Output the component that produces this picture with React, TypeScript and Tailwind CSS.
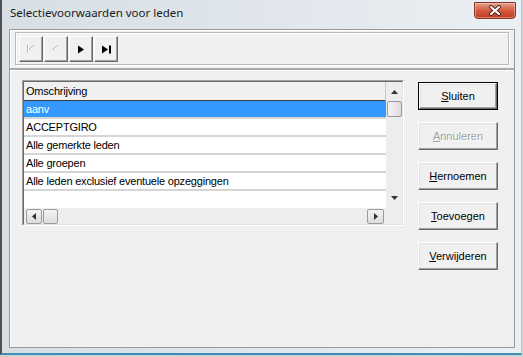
import React from "react";

const rows = [
  "aanv",
  "ACCEPTGIRO",
  "Alle gemerkte leden",
  "Alle groepen",
  "Alle leden exclusief eventuele opzeggingen",
];

function TbButton({ children }: { children: React.ReactNode }) {
  return (
    <div className="w-[24px] h-[26px] flex items-center justify-center bg-[#f0f0f0] border border-t-white border-l-white border-r-[#696969] border-b-[#696969] shadow-[inset_-1px_-1px_0_#a0a0a0]">
      {children}
    </div>
  );
}

function Btn({
  u,
  post,
  def,
  disabled,
}: {
  u: string;
  post: string;
  def?: boolean;
  disabled?: boolean;
}) {
  const inner = (
    <div
      className={
        "w-full h-full flex items-center justify-center bg-[#f0f0f0] border border-t-white border-l-white border-r-[#696969] border-b-[#696969] shadow-[inset_-1px_-1px_0_#a0a0a0,inset_1px_1px_0_#e3e3e3] " +
        (disabled ? "text-[#a0a0a0] [text-shadow:1px_1px_0_#fff]" : "text-black")
      }
    >
      <span>
        <u className="underline-offset-[1px]">{u}</u>
        {post}
      </span>
    </div>
  );
  return (
    <div className={"w-[80px] h-[28px] " + (def ? "border border-black" : "")}>
      {inner}
    </div>
  );
}

export default function App() {
  return (
    <div className="w-[523px] h-[357px] bg-[#cfd3d6] overflow-hidden font-['Liberation_Sans',Arial,sans-serif] text-[11px]">
      <div className="w-[522px] h-[355px] flex flex-col border-l-2 border-l-[#505050] border-r border-r-[#9fd4ea] border-b-2 border-b-[#3f8db4] bg-gradient-to-r from-[#d7dfe5] via-[#e0e6eb] to-[#eaf0f3]">
        {/* title bar */}
        <div className="h-[29px] flex justify-between items-start">
          <div className="pl-[8px] pt-[5px] text-[11.5px] leading-[16px] text-[#1b1b1b] font-['Noto_Sans',sans-serif]">
            Selectievoorwaarden voor leden
          </div>
          <div className="mt-[2px] mr-[5px] w-[42px] h-[17px] rounded-b-[4px] border border-[#8a3322] bg-gradient-to-b from-[#e6a08c] via-[#d25a3e] to-[#c23a22] flex items-center justify-center shadow-[inset_0_0_0_1px_rgba(255,255,255,0.35)]">
            <svg width="14" height="11" viewBox="0 0 14 11">
              <path d="M3 2 L11 9 M11 2 L3 9" stroke="#5a2a22" strokeWidth="4" strokeLinecap="round" />
              <path d="M3 2 L11 9 M11 2 L3 9" stroke="#ffffff" strokeWidth="2" strokeLinecap="round" />
            </svg>
          </div>
        </div>
        {/* client area */}
        <div className="ml-[7px] w-[506px] h-[319px] border border-[#9a9a9a] bg-[#f0f0f0] shadow-[inset_1px_1px_0_#ffffff] flex flex-col">
          {/* toolbar */}
          <div className="ml-[5px] mt-[2px] w-[494px] h-[33px] border border-[#b9b9b9] shadow-[inset_1px_1px_0_#fff,1px_1px_0_#fff] flex gap-[1px] pl-[3px] pt-[3px]">
            <TbButton>
              <svg width="10" height="10" viewBox="0 0 10 10">
                <path d="M1.5 1 V9" stroke="#b8b8b8" />
                <path d="M8.5 1 L3 5 L8.5 9" stroke="#b8b8b8" fill="none" />
                <path d="M2.5 2 V10 M9.5 2 L4 6 L9.5 10" stroke="#ffffff" strokeOpacity="0.9" fill="none" />
              </svg>
            </TbButton>
            <TbButton>
              <svg width="10" height="10" viewBox="0 0 10 10">
                <path d="M7.5 1 L2 5 L7.5 9" stroke="#b8b8b8" fill="none" />
                <path d="M8.5 2 L3 6 L8.5 10" stroke="#ffffff" strokeOpacity="0.9" fill="none" />
              </svg>
            </TbButton>
            <TbButton>
              <svg width="8" height="9" viewBox="0 0 8 9">
                <path d="M1 0.5 L7 4.5 L1 8.5 Z" fill="#000" />
              </svg>
            </TbButton>
            <TbButton>
              <svg width="11" height="9" viewBox="0 0 11 9">
                <path d="M1 0.5 L7 4.5 L1 8.5 Z" fill="#000" />
                <rect x="8" y="0.5" width="2" height="8" fill="#000" />
              </svg>
            </TbButton>
          </div>
          <div className="mt-[3px] h-[3px] border-t-2 border-[#a9a9a9] border-b border-b-white" />
          {/* main */}
          <div className="flex mt-[9px] ml-[12px]">
            {/* list frame */}
            <div className="w-[382px] h-[146px] border border-t-[#a0a0a0] border-l-[#a0a0a0] border-b-white border-r-white">
              <div className="w-full h-full border border-t-[#696969] border-l-[#696969] border-b-[#e3e3e3] border-r-[#e3e3e3] flex flex-col tracking-[-0.2px]">
                <div className="flex h-[126px]">
                  <div className="w-[362px] flex flex-col bg-white">
                    <div className="h-[19px] bg-[#f0f0f0] border-b border-[#404040] border-r border-r-[#c8c8c8] pl-[2px] flex items-center text-black">
                      Omschrijving
                    </div>
                    {rows.map((r, i) => (
                      <div
                        key={r}
                        className={
                          "h-[18px] border-b-2 border-[#d6d6d6] pl-[2px] flex items-center whitespace-nowrap " +
                          (i === 0 ? "bg-[#3399ff] text-white" : "bg-white text-black")
                        }
                      >
                        {r}
                      </div>
                    ))}
                    <div className="h-[17px] bg-white" />
                  </div>
                  {/* vertical scrollbar */}
                  <div className="w-[16px] bg-[#ededed] flex flex-col items-center">
                    <div className="h-[19px] flex items-center justify-center">
                      <svg width="7" height="4" viewBox="0 0 7 4">
                        <path d="M0 4 L3.5 0 L7 4 Z" fill="#333" />
                      </svg>
                    </div>
                    <div className="w-[15px] h-[16px] border border-[#9a9a9a] bg-gradient-to-r from-[#f4f4f4] to-[#dcdcdc] rounded-[2px]" />
                    <div className="flex-1" />
                    <div className="h-[20px] flex items-center justify-center">
                      <svg width="7" height="4" viewBox="0 0 7 4">
                        <path d="M0 0 L3.5 4 L7 0 Z" fill="#333" />
                      </svg>
                    </div>
                  </div>
                </div>
                {/* horizontal scrollbar */}
                <div className="flex h-[16px] bg-[#ededed]">
                  <div className="w-[362px] flex items-center pl-[2px] pr-[2px]">
                    <div className="w-[16px] h-[15px] border border-[#9a9a9a] rounded-[2px] bg-gradient-to-b from-[#f4f4f4] to-[#dcdcdc] flex items-center justify-center">
                      <svg width="4" height="7" viewBox="0 0 4 7">
                        <path d="M4 0 L0 3.5 L4 7 Z" fill="#333" />
                      </svg>
                    </div>
                    <div className="ml-[1px] w-[15px] h-[15px] border border-[#9a9a9a] rounded-[2px] bg-gradient-to-b from-[#f4f4f4] to-[#dcdcdc]" />
                    <div className="flex-1" />
                    <div className="w-[17px] h-[15px] border border-[#9a9a9a] rounded-[2px] bg-gradient-to-b from-[#f4f4f4] to-[#dcdcdc] flex items-center justify-center">
                      <svg width="4" height="7" viewBox="0 0 4 7">
                        <path d="M0 0 L4 3.5 L0 7 Z" fill="#333" />
                      </svg>
                    </div>
                  </div>
                  <div className="w-[16px]" />
                </div>
              </div>
            </div>
            {/* buttons */}
            <div className="ml-[14px] mt-[2px] flex flex-col gap-[12px]">
              <Btn u="S" post="luiten" def />
              <Btn u="A" post="nnuleren" disabled />
              <Btn u="H" post="ernoemen" />
              <Btn u="T" post="oevoegen" />
              <Btn u="V" post="erwijderen" />
            </div>
          </div>
        </div>
      </div>
    </div>
  );
}
